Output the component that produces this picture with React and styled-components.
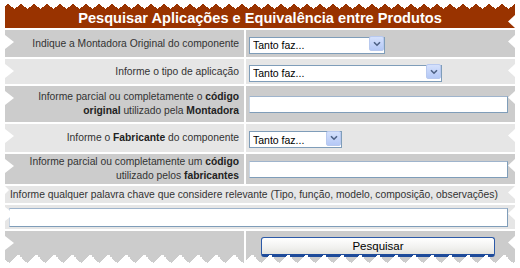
import React from 'react';
import styled, { createGlobalStyle } from 'styled-components';

const Global = createGlobalStyle`
  html, body { margin: 0; padding: 0; background: #ffffff; }
  body { font-family: "Liberation Sans", Arial, sans-serif; }
`;

const DARK = '#cccccc';
const LIGHT = '#e6e6e6';

const Panel = styled.form`
  width: 510px;
  margin: 4px 0 0 5px;
  display: flex;
  flex-direction: column;
  gap: 2px;
`;

const Header = styled.div`
  position: relative;
  height: 24px;
  background: #993300;
  display: flex;
  align-items: center;
  justify-content: center;
  padding-top: 3px;
  box-sizing: border-box;
  color: #ffffff;
  font-weight: bold;
  font-size: 14.6px;
  &::before {
    content: '';
    position: absolute;
    left: 0; right: 0; top: 0;
    height: 5px;
    background: conic-gradient(from -52deg at 50% 100%, #fff 104deg, transparent 0) 3px 0 / 13px 5px repeat-x;
  }
  &::after {
    content: '';
    position: absolute;
    right: 0; top: 11px;
    width: 7px; height: 13px;
    background: #fff;
    clip-path: polygon(100% 0, 0 50%, 100% 100%);
  }
`;

const Row = styled.div`
  position: relative;
  display: grid;
  grid-template-columns: ${p => (p.$wide ? '1fr' : '239px 1fr')};
  column-gap: 2px;
  height: ${p => p.$h}px;
  &::before {
    content: '';
    position: absolute;
    left: 0; top: ${p => p.$notch ?? 5}px;
    width: ${p => (p.$small ? 4 : 9)}px;
    height: ${p => (p.$small ? 8 : 14)}px;
    background: #fff;
    clip-path: polygon(0 0, 100% 50%, 0 100%);
    z-index: 2;
  }
  &::after {
    content: '';
    position: absolute;
    right: 0; top: ${p => p.$notch ?? 5}px;
    width: 7px; height: 13px;
    background: #fff;
    clip-path: polygon(100% 0, 0 50%, 100% 100%);
    z-index: 2;
  }
`;

const Label = styled.div`
  background: ${p => p.$tone};
  display: flex;
  align-items: center;
  justify-content: ${p => (p.$left ? 'flex-start' : 'flex-end')};
  text-align: ${p => (p.$left ? 'left' : 'right')};
  padding: ${p => (p.$left ? '0 0 0 5px' : '0 5px 0 0')};
  font-size: 10.3px;
  line-height: 14px;
  color: #333333;
  white-space: nowrap;
  b { color: #222; }
`;

const Field = styled.div`
  background: ${p => p.$tone};
  display: flex;
  align-items: center;
  padding-left: ${p => p.$pad ?? 3}px;
`;

const SelectWrap = styled.div`
  position: relative;
  width: ${p => p.$w}px;
  height: 17px;
`;

const Select = styled.select`
  appearance: none;
  -webkit-appearance: none;
  width: 100%;
  height: 100%;
  box-sizing: border-box;
  margin: 0;
  border: 1px solid #7f9db9;
  background: #ffffff;
  font-family: "Liberation Sans", Arial, sans-serif;
  font-size: 10.5px;
  color: #000;
  padding: 0 0 0 3px;
  outline: none;
`;

const Arrow = styled.span`
  position: absolute;
  right: 1px; top: 1px;
  width: 15px; height: 15px;
  box-sizing: border-box;
  border: 1px solid #b8c9ef;
  border-radius: 2px;
  background: linear-gradient(#d5e1fc, #b4c8f6);
  display: flex;
  align-items: center;
  justify-content: center;
  pointer-events: none;
`;

const TextInput = styled.input`
  width: ${p => p.$w}px;
  height: ${p => p.$h ?? 17}px;
  box-sizing: border-box;
  margin: 0;
  border: 1px solid #7f9db9;
  border-top-color: #9fb4cc;
  border-left-color: #c9d5e3;
  background: #ffffff;
  font-family: "Liberation Sans", Arial, sans-serif;
  font-size: 11px;
  padding: 0 3px;
  outline: none;
`;

const BottomRow = styled(Row)`
  overflow: hidden;
`;

const Teeth = styled.span`
  position: absolute;
  left: 0; right: 0; bottom: 0;
  height: 9px;
  background: conic-gradient(from 135deg at 50% 0, #fff 90deg, transparent 0) 4px 0 / 18px 9px repeat-x;
  z-index: 3;
  pointer-events: none;
`;

const ButtonCell = styled(Field)`
  align-items: flex-start;
  padding-left: 15px;
  padding-top: 6px;
`;

const Button = styled.button`
  width: 234px;
  height: 20px;
  box-sizing: border-box;
  margin: 0;
  border: 1px solid #2c5aa8;
  border-bottom: 3px solid #1e4b9a;
  border-radius: 3px;
  background: linear-gradient(#ffffff, #f1f1ef 60%, #e3e3de);
  font-family: "Liberation Sans", Arial, sans-serif;
  font-size: 11.5px;
  color: #000;
  padding: 0 0 1px;
  line-height: 14px;
`;

const Chevron = () => (
  <svg width="8" height="6" viewBox="0 0 8 6">
    <path d="M1 1.2 L4 4.2 L7 1.2" fill="none" stroke="#4d6185" strokeWidth="1.6" />
  </svg>
);

const Dropdown = ({ w }) => (
  <SelectWrap $w={w}>
    <Select defaultValue="">
      <option value="">Tanto faz...</option>
    </Select>
    <Arrow><Chevron /></Arrow>
  </SelectWrap>
);

export default function App() {
  return (
    <>
      <Global />
      <Panel onSubmit={e => e.preventDefault()}>
        <Header>Pesquisar Aplicações e Equivalência entre Produtos</Header>

        <Row $h={27}>
          <Label $tone={DARK}>Indique a Montadora Original do componente</Label>
          <Field $tone={DARK}><Dropdown w={136} /></Field>
        </Row>

        <Row $h={25}>
          <Label $tone={LIGHT}>Informe o tipo de aplicação</Label>
          <Field $tone={LIGHT}><Dropdown w={193} /></Field>
        </Row>

        <Row $h={36}>
          <Label $tone={DARK}>
            <span>Informe parcial ou completamente o <b>código</b><br /><b>original</b> utilizado pela <b>Montadora</b></span>
          </Label>
          <Field $tone={DARK}><TextInput $w={259} /></Field>
        </Row>

        <Row $h={28}>
          <Label $tone={LIGHT}>
            <span>Informe o <b>Fabricante</b> do componente</span>
          </Label>
          <Field $tone={LIGHT}><Dropdown w={93} /></Field>
        </Row>

        <Row $h={30}>
          <Label $tone={DARK}>
            <span>Informe parcial ou completamente um <b>código</b><br />utilizado pelos <b>fabricantes</b></span>
          </Label>
          <Field $tone={DARK}><TextInput $w={259} /></Field>
        </Row>

        <Row $h={17} $wide $notch={0} $small>
          <Label $tone={LIGHT} $left>
            Informe qualquer palavra chave que considere relevante (Tipo, função, modelo, composição, observações)
          </Label>
        </Row>

        <Row $h={24} $wide $notch={2}>
          <Field $tone={LIGHT} $pad={4}><TextInput $w={499} $h={19} /></Field>
        </Row>

        <BottomRow $h={32}>
          <Field $tone={DARK} />
          <ButtonCell $tone={DARK}>
            <Button type="submit">Pesquisar</Button>
          </ButtonCell>
          <Teeth />
        </BottomRow>
      </Panel>
    </>
  );
}
